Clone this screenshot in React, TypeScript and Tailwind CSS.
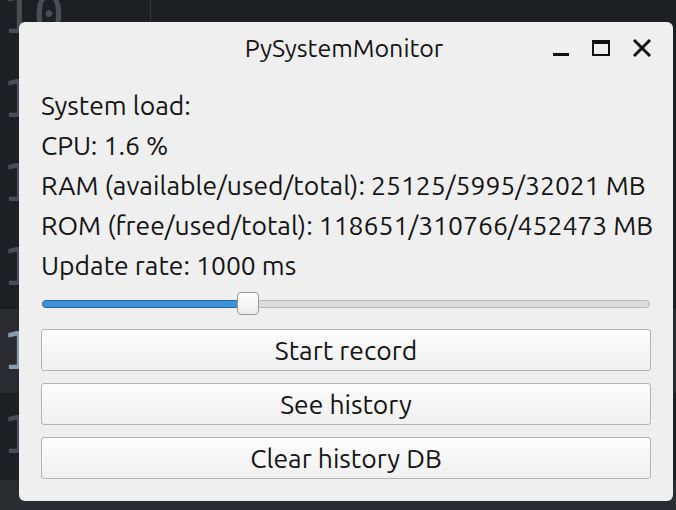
import { useState } from 'react';

const font = { fontFamily: 'Ubuntu, "Noto Sans", "Open Sans", sans-serif' };
const mono = { fontFamily: '"DejaVu Sans Mono", monospace' };

function EditorBackdrop() {
  const lines = ['11', '12', '13', '14', '15'];
  return (
    <div className="absolute inset-0 overflow-hidden bg-[#1e1f22]">
      <div className="h-[84px] -mt-[27px] flex items-center text-[#4a4d54]">
        <span className="text-[52px] leading-none pl-[2px]" style={mono}>
          10
        </span>
      </div>
      {/* rest of the gutter peeks out left of the window only */}
      <div className="flex flex-col">
        {lines.map((n, i) => (
          <div
            key={n}
            className={
              i === 3
                ? 'h-[84px] flex items-center bg-[#2a2b2f] text-[#8a9bb0]'
                : 'h-[84px] flex items-center text-[#4a4d54]'
            }
          >
            <div className="w-[19px] overflow-hidden">
              <span className="text-[52px] leading-none pl-[2px]" style={mono}>
                {n}
              </span>
            </div>
          </div>
        ))}
      </div>
      <div className="absolute left-[150px] top-0 h-[22px] w-px bg-[#33353a]" />
      <div className="absolute left-0 right-0 top-[480px] bottom-0 bg-[#2b2c30]" />
    </div>
  );
}

function Btn({ label }: { label: string }) {
  return (
    <button className="h-[42px] w-full rounded-[3px] border border-[#b4b4b4] bg-gradient-to-b from-[#fdfdfd] to-[#f0f0f0] text-[26.5px] leading-none text-[#141414]">
      {label}
    </button>
  );
}

export default function App() {
  const [rate] = useState(1000);
  return (
    <div className="relative w-[676px] h-[510px] overflow-hidden" style={font}>
      <EditorBackdrop />
      <div className="absolute left-[19px] top-[22px] w-[654px] h-[479px] rounded-[6px] bg-[#efefef] flex flex-col text-[#141414]">
        <div className="relative h-[52px] flex items-center justify-center">
          <span className="text-[25px] leading-none mt-[1px] -ml-[4px]">PySystemMonitor</span>
          <div className="absolute right-[21px] top-[16px] flex items-center gap-[21px]">
            <svg width="18" height="20" viewBox="0 0 18 20">
              <rect x="1" y="15" width="16" height="3" fill="#111" />
            </svg>
            <svg width="20" height="20" viewBox="0 0 20 20">
              <rect x="2" y="3" width="16" height="14" fill="none" stroke="#111" strokeWidth="2" />
              <rect x="2" y="3" width="16" height="3" fill="#111" />
            </svg>
            <svg width="20" height="20" viewBox="0 0 20 20">
              <path d="M2 2 L18 18 M18 2 L2 18" stroke="#111" strokeWidth="3" />
            </svg>
          </div>
        </div>
        <div className="flex flex-col px-[22px] text-[26.5px] leading-[40px] mt-[11px] whitespace-nowrap">
          <div>System load:</div>
          <div>CPU: 1.6 %</div>
          <div>RAM (available/used/total): 25125/5995/32021 MB</div>
          <div>ROM (free/used/total): 118651/310766/452473 MB</div>
          <div>Update rate: {rate} ms</div>
        </div>
        <div className="relative mx-[23px] mt-[7px] h-[23px] flex items-center">
          <div className="w-full h-[8px] rounded-full border border-[#b8b8b8] bg-[#dcdcdc]" />
          <div className="absolute left-0 w-[205px] h-[8px] rounded-l-full border border-[#2a6aa3] bg-[#3d93d8]" />
          <div className="absolute left-[195px] top-0 w-[22px] h-[23px] rounded-[4px] border border-[#9c9c9c] bg-gradient-to-b from-[#ffffff] to-[#ececec]" />
        </div>
        <div className="flex flex-col gap-[12px] px-[22px] mt-[14px]">
          <Btn label="Start record" />
          <Btn label="See history" />
          <Btn label="Clear history DB" />
        </div>
      </div>
    </div>
  );
}
